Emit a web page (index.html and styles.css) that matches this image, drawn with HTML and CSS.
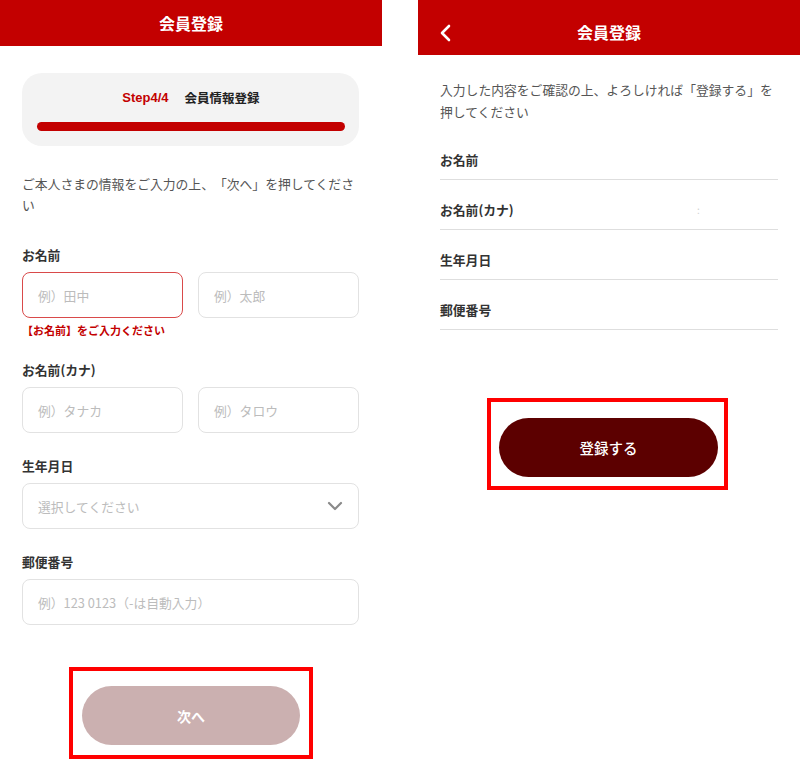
FILE: index.html
```html
<!DOCTYPE html>
<html lang="ja">
<head>
<meta charset="utf-8">
<link rel="stylesheet" href="styles.css">
</head>
<body>
<div class="screens">
  <section class="panel panel-left">
    <header class="bar bar-left"><h1 class="bar-title">会員登録</h1></header>
    <div class="content">
      <div class="step-card">
        <div class="step-head"><span class="step-num">Step4/4</span><span class="step-name">会員情報登録</span></div>
        <div class="progress"></div>
      </div>
      <p class="lead">ご本人さまの情報をご入力の上、「次へ」を押してください</p>

      <div class="group group-first">
        <div class="label">お名前</div>
        <div class="pair">
          <div class="field field-error">例）田中</div>
          <div class="field">例）太郎</div>
        </div>
        <div class="error">【お名前】をご入力ください</div>
      </div>

      <div class="group">
        <div class="label">お名前(カナ)</div>
        <div class="pair">
          <div class="field">例）タナカ</div>
          <div class="field">例）タロウ</div>
        </div>
      </div>

      <div class="group">
        <div class="label">生年月日</div>
        <div class="field field-select">
          <span>選択してください</span>
          <svg class="chev" width="16" height="10" viewBox="0 0 16 10"><path d="M2 2 L8 8 L14 2" fill="none" stroke="#8a8a8a" stroke-width="2.2" stroke-linecap="round" stroke-linejoin="round"/></svg>
        </div>
      </div>

      <div class="group">
        <div class="label">郵便番号</div>
        <div class="field">例）123 0123（-は自動入力）</div>
      </div>

      <div class="highlight highlight-left">
        <div class="btn btn-disabled">次へ</div>
      </div>
    </div>
  </section>

  <section class="panel panel-right">
    <header class="bar bar-right">
      <svg class="back" width="14" height="18" viewBox="0 0 14 18"><path d="M10 2 L3 9 L10 16" fill="none" stroke="#fff" stroke-width="2.6" stroke-linecap="round" stroke-linejoin="round"/></svg>
      <h1 class="bar-title">会員登録</h1>
    </header>
    <div class="content content-right">
      <p class="lead lead-right">入力した内容をご確認の上、よろしければ「登録する」を押してください</p>
      <div class="rows">
        <div class="row">お名前</div>
        <div class="row">お名前(カナ)<span class="ghost">:</span></div>
        <div class="row">生年月日</div>
        <div class="row">郵便番号</div>
      </div>
      <div class="highlight highlight-right">
        <div class="btn btn-primary">登録する</div>
      </div>
    </div>
  </section>
</div>
</body>
</html>
```

FILE: styles.css
```css
* { box-sizing: border-box; }
html, body { margin: 0; padding: 0; background: #fff; }
body {
  font-family: "Noto Sans CJK JP", "Noto Sans", sans-serif;
  color: #333;
  width: 800px;
  height: 759px;
  overflow: hidden;
  text-spacing-trim: space-all;
}
.screens {
  display: flex;
  gap: 36px;
}
.panel {
  width: 382px;
  flex: none;
}
.bar {
  background: #c30000;
  color: #fff;
  display: flex;
  align-items: center;
  justify-content: center;
  position: relative;
}
.bar-left { height: 46px; }
.bar-right { height: 55px; padding-top: 9px; }
.bar-title {
  margin: 0;
  font-size: 16px;
  font-weight: 700;
  line-height: 20px;
}
.back {
  position: absolute;
  left: 21px;
  top: 24px;
}
.content {
  padding: 27px 23px 0 22px;
}
.step-card {
  background: #f3f3f3;
  border-radius: 20px;
  height: 73px;
  padding: 16px 14px 0 15px;
}
.step-head {
  display: flex;
  justify-content: center;
  gap: 16px;
  font-size: 12.5px;
  font-weight: 700;
  line-height: 18px;
  color: #222;
}
.step-num { color: #c30000; font-family: "Liberation Sans", "Noto Sans CJK JP", sans-serif; font-size: 13px; }
.progress {
  margin-top: 15px;
  height: 9px;
  border-radius: 5px;
  background: #c30000;
}
.lead {
  margin: 27px 0 0;
  font-size: 12.8px;
  line-height: 21px;
  color: #555;
}
.group { margin-top: 24px; }
.group-first { margin-top: 31px; }
.label {
  font-size: 12.8px;
  font-weight: 700;
  line-height: 18px;
  color: #333;
  margin-bottom: 8px;
}
.pair {
  display: grid;
  grid-template-columns: 1fr 1fr;
  gap: 15px;
}
.field {
  height: 46px;
  border: 1px solid #e2e2e2;
  border-radius: 8px;
  padding: 0 15px;
  display: flex;
  align-items: center;
  font-size: 12.8px;
  color: #bcbcbc;
}
.field-error { border-color: #d94a4a; }
.field-select { justify-content: space-between; }
.error {
  margin-top: 5px;
  font-size: 11px;
  font-weight: 700;
  line-height: 14px;
  color: #c30000;
  margin-bottom: 2px;
}
.highlight {
  border: 4px solid #ff0000;
}
.highlight-left {
  margin: 42px 0 0 47px;
  width: 244px;
  height: 92px;
  padding: 15px 9px 0 9px;
}
.btn {
  height: 59px;
  border-radius: 30px;
  display: flex;
  align-items: center;
  justify-content: center;
  color: #fff;
  font-size: 14px;
  font-weight: 700;
}
.btn-disabled { background: #cbb0b0; }
.btn-primary { background: #5c0000; font-weight: 500; font-size: 14.5px; }
.content-right { padding: 24px 22px 0 22px; }
.lead-right { margin: 0; line-height: 22px; }
.rows { margin-top: 7px; }
.row {
  height: 50px;
  padding-top: 21px;
  font-size: 12.8px;
  font-weight: 700;
  line-height: 18px;
  border-bottom: 1px solid #dedede;
  position: relative;
}
.ghost {
  position: absolute;
  left: 257px;
  top: 21px;
  color: #d0d0d0;
  font-weight: 400;
  font-size: 10px;
}
.highlight-right {
  margin: 68px 0 0 47px;
  width: 241px;
  height: 92px;
  padding: 16px 6px 0 8px;
}
```
